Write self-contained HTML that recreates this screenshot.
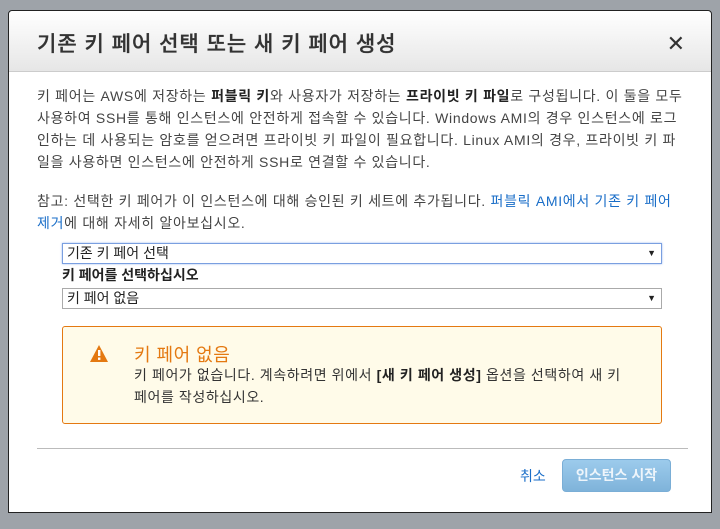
<!DOCTYPE html>
<html><head><meta charset="utf-8"><style>
*{margin:0;padding:0;box-sizing:border-box}
body{width:720px;height:529px;background:#9ea3a9;position:relative;overflow:hidden;font-family:"Liberation Sans","Noto Sans CJK KR",sans-serif;color:#444}
.m{position:absolute;left:8px;top:10px;width:704px;height:503px;background:#fff;border:1px solid #222;border-radius:4px 4px 0 0}
.hd{height:61px;background:linear-gradient(#fff,#e6e6e6);border-bottom:1px solid #ccc;border-radius:4px 4px 0 0;position:relative}
.hd h1{position:absolute;left:28px;top:17px;font-size:21px;font-weight:500;color:#333;letter-spacing:1px;-webkit-text-stroke:0.3px #333}
.x{position:absolute;right:26px;top:20px;font-size:22px;color:#333}
p{position:absolute;left:28px;width:680px;font-size:14px;line-height:22px;color:#444;white-space:nowrap;letter-spacing:0.7px}
b{color:#222}
a{color:#1a6ec8;text-decoration:none}
.s{position:absolute;left:53px;width:600px;height:21px;border:1px solid #aaa;font-size:14px;line-height:19px;padding-left:4px;color:#222}
.s:after{content:"▼";position:absolute;right:5px;top:0;font-size:9px}
.al{position:absolute;left:53px;top:315px;width:600px;height:98px;background:#fffbe9;border:1px solid #e47911;border-radius:3px}
</style></head><body>
<div class="m">
<div class="hd"><h1>기존 키 페어 선택 또는 새 키 페어 생성</h1><div class="x">✕</div></div>
<p style="top:74px">키 페어는 AWS에 저장하는 <b>퍼블릭 키</b>와 사용자가 저장하는 <b>프라이빗 키 파일</b>로 구성됩니다. 이 둘을 모두<br>사용하여 SSH를 통해 인스턴스에 안전하게 접속할 수 있습니다. Windows AMI의 경우 인스턴스에 로그<br>인하는 데 사용되는 암호를 얻으려면 프라이빗 키 파일이 필요합니다. Linux AMI의 경우, 프라이빗 키 파<br>일을 사용하면 인스턴스에 안전하게 SSH로 연결할 수 있습니다.</p>
<p style="top:179px">참고: 선택한 키 페어가 이 인스턴스에 대해 승인된 키 세트에 추가됩니다. <a>퍼블릭 AMI에서 기존 키 페어<br>제거</a>에 대해 자세히 알아보십시오.</p>
<div class="s" style="top:232px;border:1px solid #7a9fe0;box-shadow:0 0 2px #9bb9ee">기존 키 페어 선택</div>
<div style="position:absolute;left:53px;top:254px;font-size:14px;font-weight:bold;color:#222">키 페어를 선택하십시오</div>
<div class="s" style="top:277px">키 페어 없음</div>
<div class="al">
<svg style="position:absolute;left:26px;top:17px" width="20" height="19" viewBox="0 0 20 19"><path d="M10 1L19 18H1Z" fill="#e47911"/><rect x="9" y="6" width="2.4" height="6" fill="#fff"/><rect x="9" y="13.5" width="2.4" height="2.4" fill="#fff"/></svg>
<div style="position:absolute;left:71px;top:14px;font-size:18px;color:#e47911;letter-spacing:0.5px">키 페어 없음</div>
<div style="position:absolute;left:71px;top:37px;white-space:nowrap;font-size:14px;line-height:22px;color:#333;letter-spacing:0.6px">키 페어가 없습니다. 계속하려면 위에서 <b>[새 키 페어 생성]</b> 옵션을 선택하여 새 키<br>페어를 작성하십시오.</div>
</div>
<div style="position:absolute;left:28px;top:437px;width:651px;border-top:1px solid #bbb"></div>
<div style="position:absolute;left:511px;top:455px;font-size:14px;color:#1a6ec8">취소</div>
<div style="position:absolute;left:553px;top:448px;width:109px;height:33px;background:linear-gradient(#9ccbec,#7fb3da);border:1px solid #7aaed6;border-radius:4px;color:#eef5fb;font-size:14px;font-weight:bold;text-align:center;line-height:31px">인스턴스 시작</div>
</div>
</body></html>
